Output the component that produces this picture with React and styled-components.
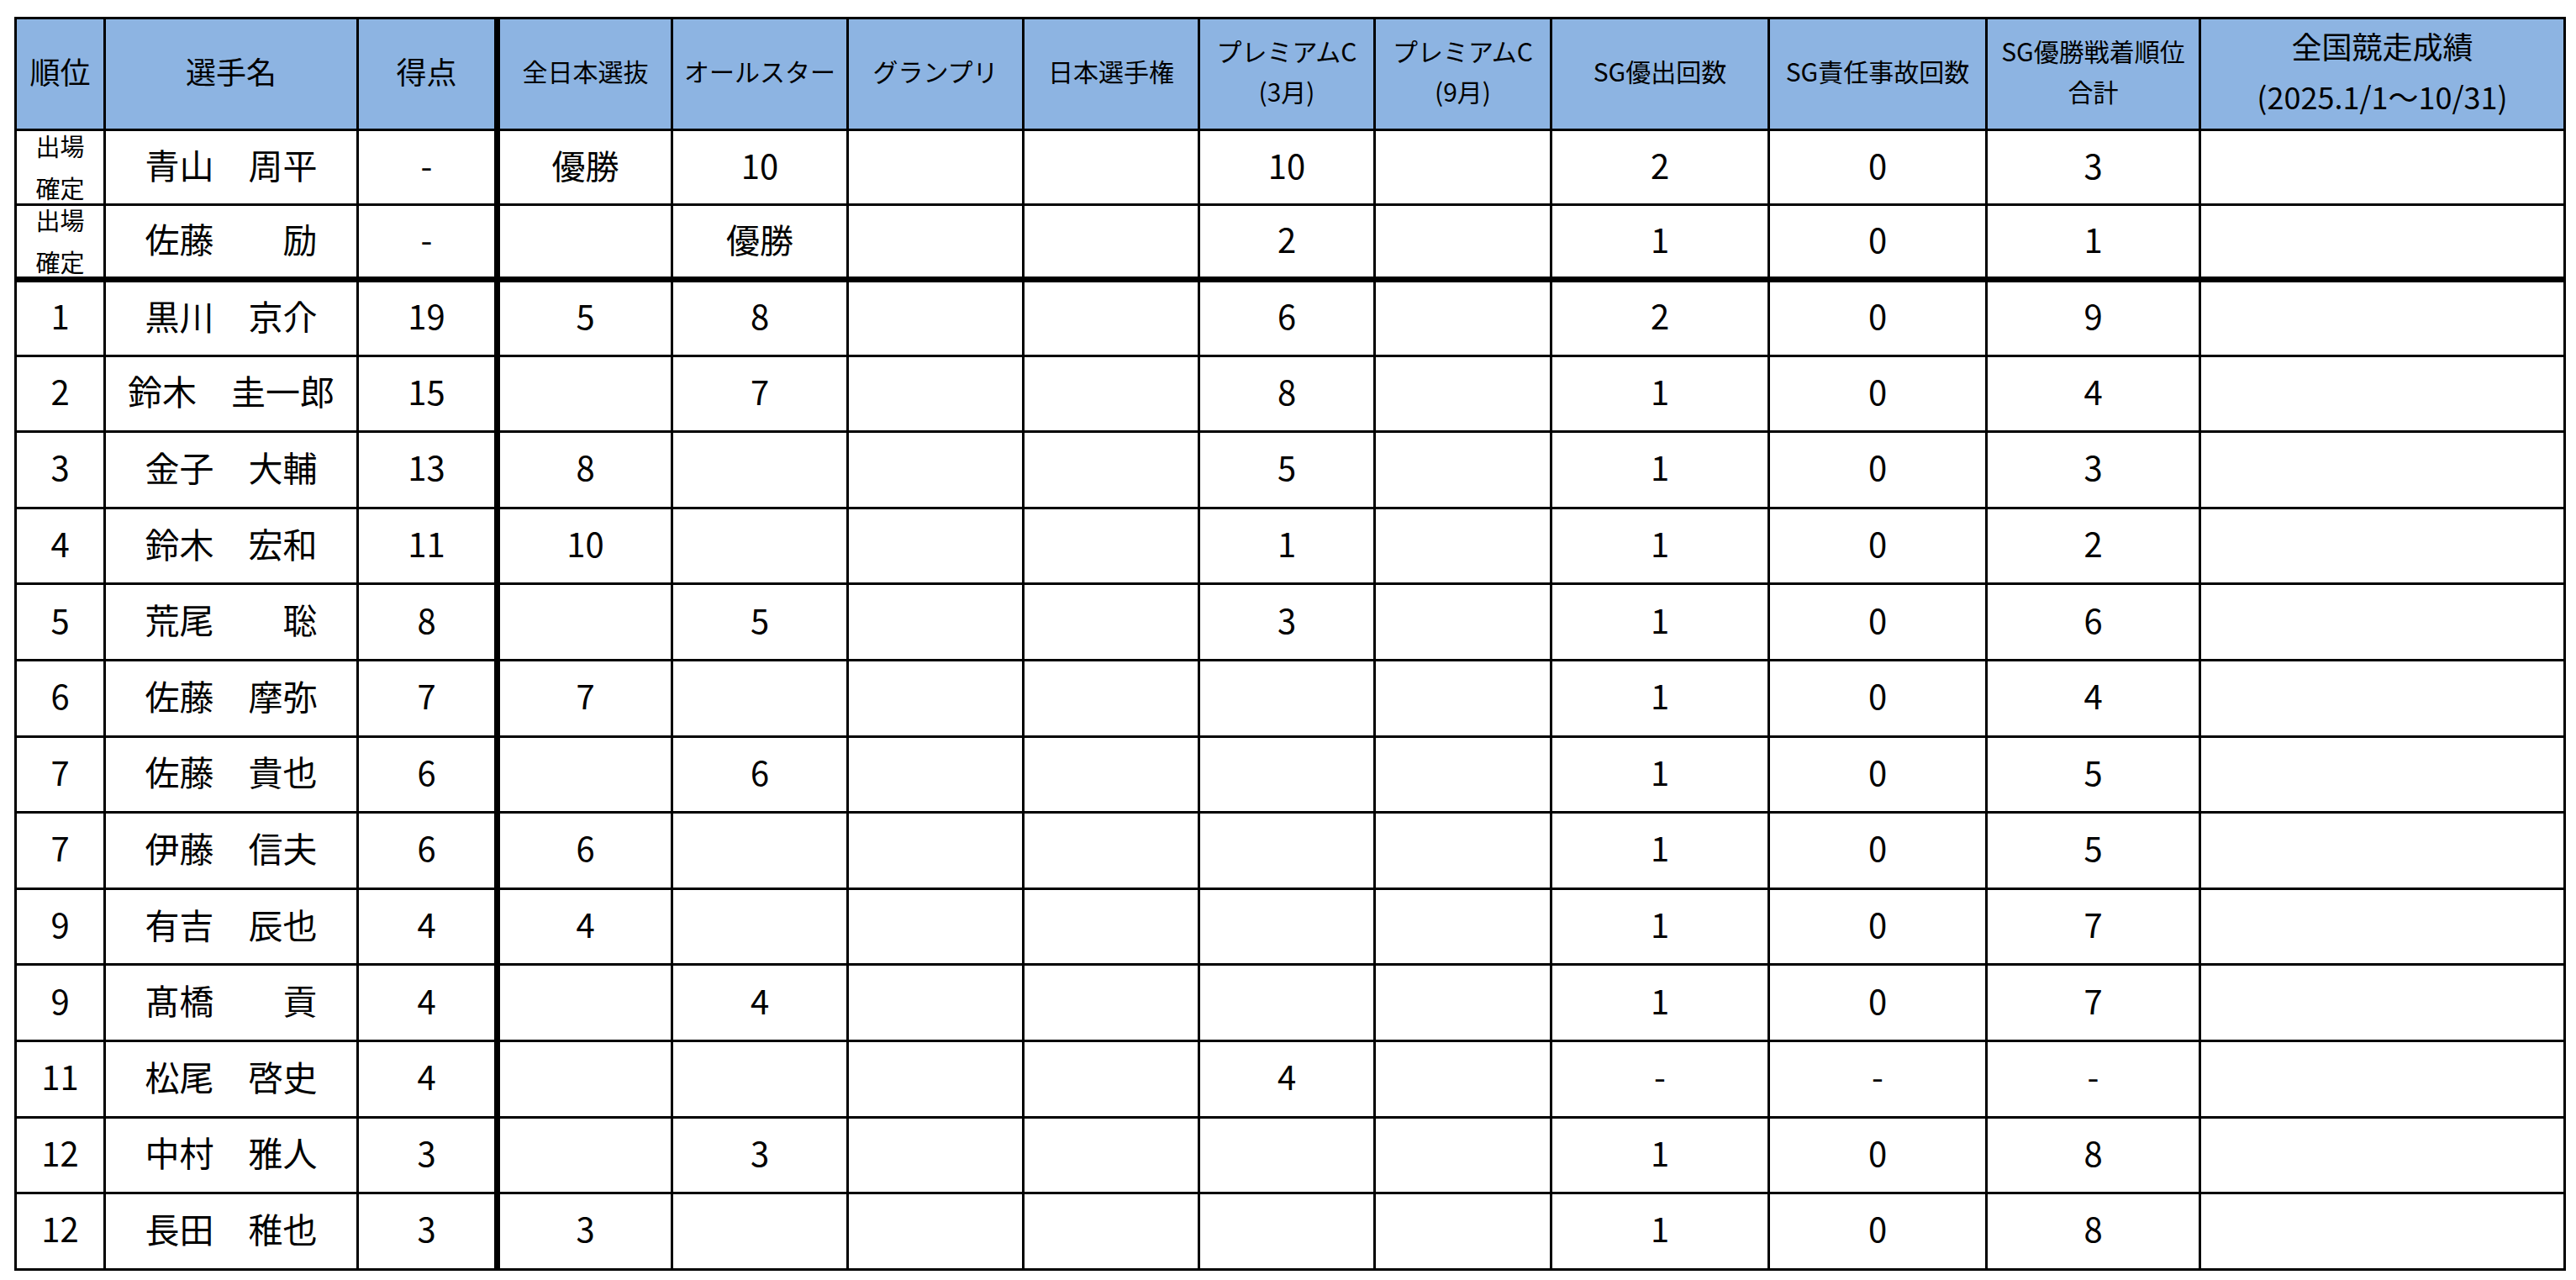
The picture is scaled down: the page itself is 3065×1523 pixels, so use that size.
import React from 'react';
import styled, { createGlobalStyle } from 'styled-components';

const GlobalStyle = createGlobalStyle`
  html, body {
    margin: 0;
    padding: 0;
    background: #ffffff;
  }
  body {
    font-family: "Noto Sans CJK JP", "Noto Sans", sans-serif;
    color: #000000;
  }
`;

const Page = styled.div`
  padding: 20px 0 0 17px;
`;

const Table = styled.table`
  width: 3033px;
  table-layout: fixed;
  border-collapse: collapse;
  border: 3px solid #000;
`;

const HeadRow = styled.tr`
  height: 133px;
`;

const HeadCell = styled.th`
  background-color: #8db4e2;
  border: 3px solid #000;
  padding: 0 0 9px;
  font-weight: 400;
  font-size: ${(p) => p.$size || 30}px;
  line-height: ${(p) => p.$lh || 48}px;
  text-align: center;
  vertical-align: middle;
  white-space: nowrap;

  &:nth-child(3) {
    border-right-width: 7px;
  }
`;

const Line = styled.span`
  display: block;
`;

const Row = styled.tr`
  height: ${(p) => (p.$confirmed ? 89 : 90.6)}px;

  td {
    border-bottom-width: ${(p) => (p.$divider ? 7 : 3)}px;
  }
`;

const Cell = styled.td`
  border: 3px solid #000;
  padding: 0 0 7px;
  font-size: 40px;
  line-height: 1;
  text-align: center;
  vertical-align: middle;
  white-space: nowrap;

  &:nth-child(2) {
    font-size: 41px;
  }

  &:nth-child(3) {
    border-right-width: 7px;
  }
`;

const Status = styled.div`
  height: 74px;
  margin-bottom: -5px;
  display: flex;
  flex-direction: column;
  justify-content: center;
  align-items: center;
  font-size: 29px;
  line-height: 50px;
`;

const columns = [
  { w: 106, label: ['順位'], size: 36 },
  { w: 301, label: ['選手名'], size: 36 },
  { w: 166, label: ['得点'], size: 36 },
  { w: 208, label: ['全日本選抜'] },
  { w: 209, label: ['オールスター'] },
  { w: 209, label: ['グランプリ'] },
  { w: 209, label: ['日本選手権'] },
  { w: 209, label: ['プレミアムC', '(3月)'] },
  { w: 210, label: ['プレミアムC', '(9月)'] },
  { w: 259, label: ['SG優出回数'] },
  { w: 259, label: ['SG責任事故回数'] },
  { w: 254, label: ['SG優勝戦着順位', '合計'] },
  { w: 434, label: ['全国競走成績', '(2025.1/1～10/31)'], size: 36, lh: 60 },
];

// rank, name, points, 全日本選抜, オールスター, グランプリ, 日本選手権, PC3, PC9, 優出, 事故, 着順, 成績
const rows = [
  ['出場確定', '青山　周平', '-', '優勝', '10', '', '', '10', '', '2', '0', '3', ''],
  ['出場確定', '佐藤　　励', '-', '', '優勝', '', '', '2', '', '1', '0', '1', ''],
  ['1', '黒川　京介', '19', '5', '8', '', '', '6', '', '2', '0', '9', ''],
  ['2', '鈴木　圭一郎', '15', '', '7', '', '', '8', '', '1', '0', '4', ''],
  ['3', '金子　大輔', '13', '8', '', '', '', '5', '', '1', '0', '3', ''],
  ['4', '鈴木　宏和', '11', '10', '', '', '', '1', '', '1', '0', '2', ''],
  ['5', '荒尾　　聡', '8', '', '5', '', '', '3', '', '1', '0', '6', ''],
  ['6', '佐藤　摩弥', '7', '7', '', '', '', '', '', '1', '0', '4', ''],
  ['7', '佐藤　貴也', '6', '', '6', '', '', '', '', '1', '0', '5', ''],
  ['7', '伊藤　信夫', '6', '6', '', '', '', '', '', '1', '0', '5', ''],
  ['9', '有吉　辰也', '4', '4', '', '', '', '', '', '1', '0', '7', ''],
  ['9', '髙橋　　貢', '4', '', '4', '', '', '', '', '1', '0', '7', ''],
  ['11', '松尾　啓史', '4', '', '', '', '', '4', '', '-', '-', '-', ''],
  ['12', '中村　雅人', '3', '', '3', '', '', '', '', '1', '0', '8', ''],
  ['12', '長田　稚也', '3', '3', '', '', '', '', '', '1', '0', '8', ''],
];

const App = () => {
  return (
    <Page>
      <GlobalStyle />
      <Table>
        <colgroup>
          {columns.map((c, i) => (
            <col key={i} style={{ width: c.w }} />
          ))}
        </colgroup>
        <thead>
          <HeadRow>
            {columns.map((c, i) => (
              <HeadCell key={i} $size={c.size} $lh={c.lh}>
                {c.label.map((t) => (
                  <Line key={t}>{t}</Line>
                ))}
              </HeadCell>
            ))}
          </HeadRow>
        </thead>
        <tbody>
          {rows.map((r, i) => {
            const confirmed = r[0] === '出場確定';
            return (
              <Row key={i} $confirmed={confirmed} $divider={i === 1}>
                {r.map((v, j) => (
                  <Cell key={j}>
                    {j === 0 && confirmed ? (
                      <Status>
                        <span>出場</span>
                        <span>確定</span>
                      </Status>
                    ) : (
                      v
                    )}
                  </Cell>
                ))}
              </Row>
            );
          })}
        </tbody>
      </Table>
    </Page>
  );
};

export default App;
